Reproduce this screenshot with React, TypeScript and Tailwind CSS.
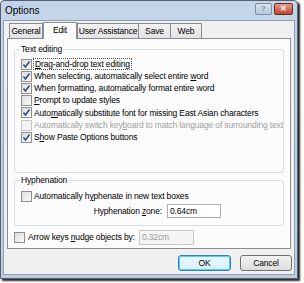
import type { ReactNode } from "react";

function Check({ checked, disabled }: { checked?: boolean; disabled?: boolean }) {
  return (
    <span
      className={`relative inline-block w-[11px] h-[11px] shrink-0 border ${
        disabled ? "border-[#c6c6c6] bg-[#f4f4f4]" : "border-[#8f8f8f] bg-gradient-to-br from-[#dcdcdc] to-[#fbfbfb]"
      }`}
    >
      {checked && (
        <svg viewBox="0 0 11 11" className="absolute left-[-1px] top-[-1px] w-[11px] h-[11px]">
          <path d="M2.5 5.5 L4.5 8 L8.5 2.5" stroke="#2e4d86" strokeWidth="1.6" fill="none" />
        </svg>
      )}
    </span>
  );
}

function Row({ checked, disabled, children }: { checked?: boolean; disabled?: boolean; children: ReactNode }) {
  return (
    <div className="flex items-center gap-[2px] h-[12.2px] whitespace-nowrap">
      <Check checked={checked} disabled={disabled} />
      <span className={disabled ? "text-[#a0a0a0]" : "text-black"}>{children}</span>
    </div>
  );
}

const tab = "h-[15px] flex items-center justify-center border border-[#898c95] border-b-0 bg-gradient-to-b from-[#f2f2f2] to-[#e3e3e3]";

export default function App() {
  return (
    <div className="w-[304px] h-[283px] bg-white" style={{ fontFamily: '"Liberation Sans", Arial, sans-serif' }}>
      <div className="w-[298px] h-[279px] flex flex-col border border-[#55606e] rounded-t-[4px] bg-gradient-to-b from-[#c4d5e9] to-[#bccde2] shadow-[2px_2px_2px_rgba(0,0,0,0.85)]">
        {/* title bar */}
        <div className="h-[19px] flex items-center justify-between pl-[4px] pr-[4px]">
          <span className="text-[10px] text-black">Options</span>
          <div className="flex gap-[2px] mt-[-3px]">
            <div className="w-[17px] h-[12px] border border-[#7d8ea6] rounded-[2px] bg-gradient-to-b from-[#d8e3f0] to-[#b7c8dd] flex items-center justify-center text-[8px] text-[#7e8fa8] font-bold">?</div>
            <div className="w-[19px] h-[12px] border border-[#6f2a22] rounded-[2px] bg-gradient-to-b from-[#e39d8e] to-[#c2422d] flex items-center justify-center text-[8px] text-white font-bold">✕</div>
          </div>
        </div>
        {/* client */}
        <div className="flex-1 mx-[2px] mb-[3px] bg-[#f0f0f0] border border-[#8e9fb5] flex flex-col text-[8.5px] tracking-[-0.15px] leading-none">
          {/* tabs */}
          <div className="flex items-end h-[17px] pl-[5px] pt-[1px]">
            <div className={`${tab} w-[34px]`}>General</div>
            <div className="h-[17px] w-[34px] flex justify-center pt-[3px] border border-[#898c95] border-b-0 bg-[#fcfcfc] relative top-[1px] z-10">Edit</div>
            <div className={`${tab} w-[62px]`}>User Assistance</div>
            <div className={`${tab} w-[32px] border-l-0`}>Save</div>
            <div className={`${tab} w-[31px] border-l-0`}>Web</div>
          </div>
          {/* panel */}
          <div className="mx-[3px] h-[211px] border border-[#898c95] bg-[#fcfcfc] px-[6px] pt-[5px] flex flex-col">
            <div className="relative border border-[#d5dfe5] rounded-[3px] h-[124px] mt-[5px] px-[6px] pt-[8px]">
              <span className="absolute left-[5px] top-[-5px] bg-[#fcfcfc] px-[1px]">Text editing</span>
              <Row checked>
                <span className="outline outline-1 outline-dotted outline-[#555] px-[1px]"><u>D</u>rag-and-drop text editing</span>
              </Row>
              <Row checked>When selecting, automatically select entire <u>w</u>ord</Row>
              <Row checked>When <u>f</u>ormatting, automatically format entire word</Row>
              <Row><u>P</u>rompt to update styles</Row>
              <Row checked>Auto<u>m</u>atically substitute font for missing East Asian characters</Row>
              <Row disabled>Automatically switch key<u>b</u>oard to match language of surrounding text</Row>
              <Row checked>S<u>h</u>ow Paste Options buttons</Row>
            </div>
            <div className="relative border border-[#d5dfe5] rounded-[3px] h-[46px] mt-[7px] px-[6px] pt-[9px]">
              <span className="absolute left-[5px] top-[-5px] bg-[#fcfcfc] px-[1px]">Hyphenation</span>
              <Row>Automatically h<u>y</u>phenate in new text boxes</Row>
              <div className="flex items-center justify-end w-[200px] mt-[2px] gap-[5px]">
                <span>Hyphenation <u>z</u>one:</span>
                <div className="w-[54px] h-[14px] border border-[#abadb3] bg-white flex items-center px-[2px]">0.64cm</div>
              </div>
            </div>
            <div className="flex items-center mt-[4px] ml-[0px]">
              <Check />
              <span className="ml-[3px] whitespace-nowrap">Arrow keys <u>n</u>udge objects by:</span>
              <div className="ml-[auto] mr-[90px] w-[55px] h-[15px] border border-[#c9c9c9] bg-[#f4f4f4] text-[#9a9a9a] flex items-center px-[2px]">0.32cm</div>
            </div>
          </div>
          {/* buttons */}
          <div className="flex justify-end gap-[9px] pr-[2px] mt-[6px]">
            <div className="w-[53px] h-[16px] rounded-[3px] border border-[#3c7fb1] bg-gradient-to-b from-[#eaf6fd] to-[#d9effc] flex items-center justify-center shadow-[inset_0_0_0_1px_#48d1fa]">OK</div>
            <div className="w-[52px] h-[16px] rounded-[3px] border border-[#707070] bg-gradient-to-b from-[#f2f2f2] to-[#dddddd] flex items-center justify-center">Cancel</div>
          </div>
        </div>
      </div>
    </div>
  );
}
